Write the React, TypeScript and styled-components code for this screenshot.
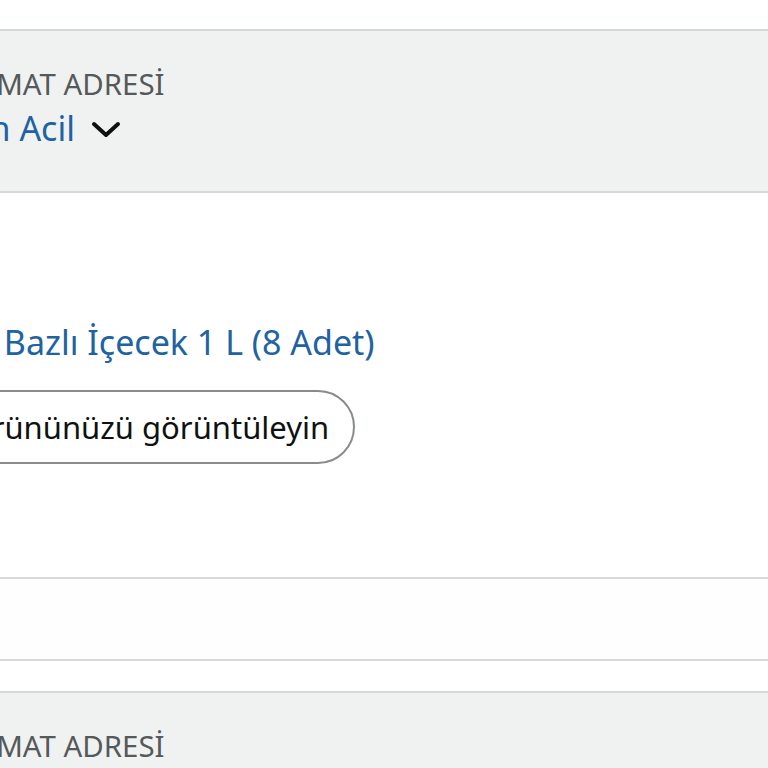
import styled, { createGlobalStyle } from "styled-components"

const GlobalStyle = createGlobalStyle`
  html, body {
    margin: 0;
    padding: 0;
    background: #ffffff;
    overflow: hidden;
  }
  body {
    font-family: "Noto Sans", "Open Sans", Arial, sans-serif;
    color: #0f1111;
  }
`

const colors = {
  border: "#d5d9d9",
  header: "#f0f2f2",
  label: "#565959",
  link: "#2162a1",
  text: "#0f1111",
  button: "#888c8c",
}

const Shell = styled.div`
  padding-top: 29px;
`

const Card = styled.section`
  border-top: 2px solid ${colors.border};
  border-bottom: 2px solid ${colors.border};
`

const CardHeader = styled.div`
  background: ${colors.header};
  border-bottom: 2px solid ${colors.border};
  height: 162px;
  box-sizing: border-box;
  padding-top: 36px;
`

const HeaderColumn = styled.div`
  margin-left: -78px;
  display: flex;
  flex-direction: column;
  gap: 7px;
`

const Label = styled.span`
  font-size: 29.4px;
  line-height: 34px;
  color: ${colors.label};
  white-space: nowrap;
`

const Recipient = styled.a`
  display: flex;
  align-items: center;
  gap: 16px;
  font-size: 34px;
  line-height: 40px;
  color: ${colors.link};
  text-decoration: none;
  white-space: nowrap;
  cursor: pointer;

  svg {
    width: 30px;
    height: 30px;
    margin-top: 4px;
  }
`

const CardBody = styled.div`
  padding: 129px 0 113px 0;
`

const BodyColumn = styled.div`
  margin-left: -57px;
  display: flex;
  flex-direction: column;
  align-items: flex-start;
  gap: 28px;
`

const ProductTitle = styled.a`
  font-size: 34px;
  line-height: 40px;
  color: ${colors.link};
  text-decoration: none;
  white-space: nowrap;
`

const PillButton = styled.button`
  font-family: inherit;
  font-size: 31px;
  line-height: 38px;
  color: ${colors.text};
  background: #ffffff;
  border: 2px solid ${colors.button};
  border-radius: 40px;
  height: 74px;
  padding: 0 24px;
  white-space: nowrap;
  cursor: pointer;
`

const Row = styled.div`
  height: 80px;
  border-bottom: 2px solid ${colors.border};
  background: #fefefe;
`

const Gap = styled.div`
  height: 30px;
`

const NextCard = styled.section`
  border-top: 2px solid ${colors.border};
`

const Chevron = () => (
  <svg viewBox="0 0 30 30" fill="none">
    <polyline
      points="3,9 15,20 27,9"
      stroke="#0f1111"
      strokeWidth="4"
      strokeLinecap="round"
      strokeLinejoin="round"
    />
  </svg>
)

const AddressHeader = () => (
  <CardHeader>
    <HeaderColumn>
      <Label>TESLİMAT ADRESİ</Label>
      <Recipient>
        Sinan Acil
        <Chevron />
      </Recipient>
    </HeaderColumn>
  </CardHeader>
)

const App = () => {
  return (
    <>
      <GlobalStyle />
      <Shell>
        <Card>
          <AddressHeader />
          <CardBody>
            <BodyColumn>
              <ProductTitle>Süt Bazlı İçecek 1 L (8 Adet)</ProductTitle>
              <PillButton>Ürününüzü görüntüleyin</PillButton>
            </BodyColumn>
          </CardBody>
        </Card>
        <Row />
        <Gap />
        <NextCard>
          <AddressHeader />
        </NextCard>
      </Shell>
    </>
  )
}

export default App
